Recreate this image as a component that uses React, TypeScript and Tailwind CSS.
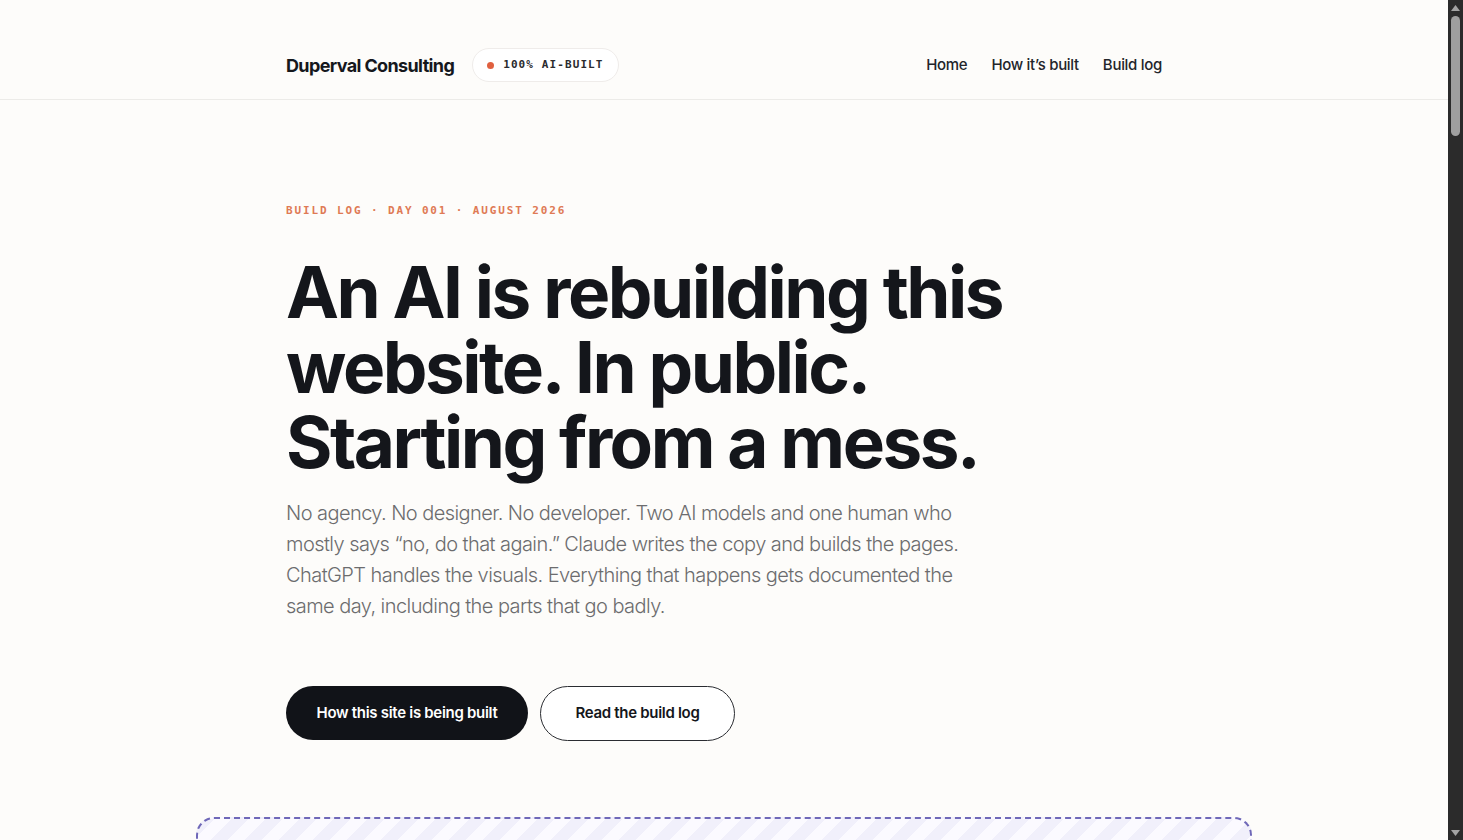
import React from 'react';

const SANS = "font-['Inter','Noto_Sans',sans-serif]";
const MONO = "font-['DejaVu_Sans_Mono','Liberation_Mono',monospace]";

function Scrollbar() {
  return (
    <div className="flex h-screen w-[15px] shrink-0 flex-col items-center bg-[#2b2b2b]">
      <div className="flex h-[15px] w-full items-center justify-center">
        <svg width="9" height="6" viewBox="0 0 9 6">
          <path d="M4.5 0 L9 6 H0 Z" fill="#a3a3a3" />
        </svg>
      </div>
      <div className="mt-[1px] h-[120px] w-[9px] rounded-full bg-[#9f9f9f]" />
      <div className="flex-1" />
      <div className="flex h-[15px] w-full items-center justify-center">
        <svg width="9" height="6" viewBox="0 0 9 6">
          <path d="M0 0 H9 L4.5 6 Z" fill="#a3a3a3" />
        </svg>
      </div>
    </div>
  );
}

export default function App() {
  return (
    <div className={`flex h-screen overflow-hidden bg-[#fdfcfa] text-[#14161b] ${SANS}`}>
      <main className="min-w-0 flex-1">
        {/* Header */}
        <header className="h-[100px] border-b border-[#ecebe8] pt-[31px]">
          <div className="mx-auto flex h-[68px] max-w-[924px] items-center justify-between px-6">
            <div className="flex items-center gap-[18px]">
              <span className="text-[18px] font-bold tracking-[-0.035em] text-[#15171c]">Duperval Consulting</span>
              <span className="flex h-[34px] items-center gap-[9px] rounded-full border border-[#efecea] bg-white px-[14px]">
                <span className="h-[7px] w-[7px] rounded-full bg-[#e0603f]" />
                <span className={`text-[11px] font-bold tracking-[0.1em] text-[#2a2b2e] ${MONO}`}>100% AI-BUILT</span>
              </span>
            </div>
            <nav className="flex items-center gap-6 text-[15px] font-medium tracking-[-0.02em] text-[#23252a]">
              <a>Home</a>
              <a>How it’s built</a>
              <a>Build log</a>
            </nav>
          </div>
        </header>

        {/* Hero */}
        <section className="mx-auto max-w-[924px] px-6 pt-[103px]">
          <p className={`text-[11px] font-bold tracking-[0.17em] text-[#df7a55] ${MONO}`}>
            BUILD LOG · DAY 001 · AUGUST 2026
          </p>
          <h1 className="mt-[35px] text-[71px] font-bold leading-[75px] tracking-[-0.035em] text-[#14161b]">
            An AI is rebuilding this
            <br />
            website. In public.
            <br />
            Starting from a mess.
          </h1>
          <p className="mt-[18px] max-w-[700px] text-[20px] font-light leading-[31px] tracking-[-0.028em] text-[#6c6c6e]">
            No agency. No designer. No developer. Two AI models and one human who mostly says “no, do that again.”
            Claude writes the copy and builds the pages. ChatGPT handles the visuals. Everything that happens gets
            documented the same day, including the parts that go badly.
          </p>
          <div className="mt-[64px] flex items-center gap-3">
            <button className="h-[54px] w-[242px] rounded-full bg-[#111318] text-[15px] font-semibold tracking-[-0.02em] text-white">
              How this site is being built
            </button>
            <button className="h-[55px] w-[195px] rounded-full border border-[#2a2c31] bg-white text-[15px] font-semibold tracking-[-0.02em] text-[#14161b]">
              Read the build log
            </button>
          </div>
        </section>

        {/* Visual placeholder */}
        <section className="mx-auto mt-[76px] max-w-[1056px] pb-24">
          <div className="h-[520px] rounded-[18px] border-2 border-dashed border-[#6f68b8] bg-[repeating-linear-gradient(135deg,#f1f0fb_0_12px,#fbfaff_12px_24px)]" />
        </section>
      </main>
      <Scrollbar />
    </div>
  );
}
